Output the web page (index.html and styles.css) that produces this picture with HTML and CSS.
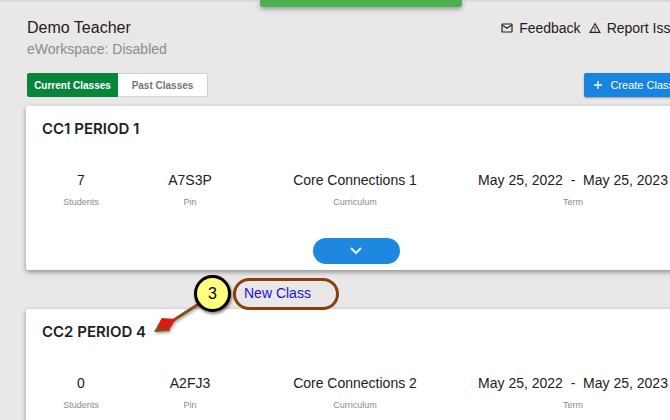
FILE: index.html
```
<!DOCTYPE html>
<html lang="en">
<head>
	<meta charset="UTF-8">
	<title>Demo Teacher - Classes</title>
	<meta name="viewport" content="width=device-width, initial-scale=1.0">
	<link rel="stylesheet" href="styles.css">
</head>
<body>
	<div class="toast" role="status"></div>
	<main class="workspace">
		<header class="header">
			<div>
				<h1 class="teacher">Demo Teacher</h1>
				<p class="status">eWorkspace: Disabled</p>
			</div>
			<nav class="links">
				<a href="#feedback">
					<svg width="12" height="12" viewBox="0 0 12 12" fill="none" stroke="currentColor" stroke-width="1.2">
						<rect x="1" y="2" width="10" height="8" rx="0.6"/>
						<path d="M1.5 3.2L6 6.2l4.500-3"/>
					</svg>
					Feedback
				</a>
				<a href="#report">
					<svg width="12" height="12" viewBox="0 0 12 12" fill="none" stroke="currentColor" stroke-width="1.1">
						<path d="M6 1.600L11 10.400H1z"/>
						<path d="M6 4.800v2.700M6 8.200v1.100"/>
					</svg>
					Report Issue
				</a>
			</nav>
		</header>

		<div class="toolbar">
			<div class="tabs">
				<button type="button" class="tab active">Current Classes</button>
				<button type="button" class="tab">Past Classes</button>
			</div>
			<button type="button" class="create">
				<svg width="10" height="10" viewBox="0 0 10 10" fill="none" stroke="currentColor" stroke-width="1.3">
					<path d="M5 1v8M1 5h8"/>
				</svg>
				Create Class
			</button>
		</div>

		<section class="card">
			<h2 class="card-title">CC1 PERIOD 1</h2>
			<dl class="details">
				<div><dt>Students</dt><dd>7</dd></div>
				<div><dt>Pin</dt><dd>A7S3P</dd></div>
				<div><dt>Curriculum</dt><dd>Core Connections 1</dd></div>
				<div><dt>Term</dt><dd>May 25, 2022 &nbsp;-&nbsp; May 25, 2023</dd></div>
			</dl>
			<button type="button" class="expand" aria-label="Show more">
				<svg width="14" height="10" viewBox="0 0 14 10" fill="none" stroke="currentColor" stroke-width="2">
					<path d="M2 2l5 5 5-5"/>
				</svg>
			</button>
		</section>

		<section class="card">
			<h2 class="card-title">CC2 PERIOD 4</h2>
			<dl class="details">
				<div><dt>Students</dt><dd>0</dd></div>
				<div><dt>Pin</dt><dd>A2FJ3</dd></div>
				<div><dt>Curriculum</dt><dd>Core Connections 2</dd></div>
				<div><dt>Term</dt><dd>May 25, 2022 &nbsp;-&nbsp; May 25, 2023</dd></div>
			</dl>
			<button type="button" class="expand" aria-label="Show more">
				<svg width="14" height="10" viewBox="0 0 14 10" fill="none" stroke="currentColor" stroke-width="2">
					<path d="M2 2l5 5 5-5"/>
				</svg>
			</button>

			<!-- step 3: points at the class title -->
			<div class="callout">
				<svg class="arrow" width="60" height="44" viewBox="0 0 60 44">
					<path d="M54 4L12 31" stroke="#86500f" stroke-width="3"/>
					<path d="M0 38L8 24L16 37z" fill="#86500f"/>
					<path d="M3 33L8 24L22 25L15 36z" fill="#d81c14"/>
				</svg>
				<span class="step">3</span>
				<span class="label">New Class</span>
			</div>
		</section>
	</main>
</body>
</html>
```

FILE: styles.css
```
* {
	box-sizing: border-box;
}
body {
	margin: 0;
	border-top: 2px solid #dbd9da;
	background: #e9e7e8;
	color: #212121;
	font-family: "Liberation Sans", Arial, sans-serif;
	font-size: 14px;
	line-height: 20px;
	overflow: hidden;
}
h1, h2, p, dl, dd {
	margin: 0;
}
button {
	border: 0;
	font-family: inherit;
	cursor: pointer;
}

.toast {
	position: absolute;
	top: 0;
	left: 260px;
	width: 202px;
	height: 7px;
	border-radius: 0 0 3px 3px;
	background: #4caf50;
	box-shadow: 0 2px 5px rgba(0, 0, 0, .35);
}

/* the sheet runs on past the right edge of the window */
.workspace {
	margin: 0 -16px 0 26px;
	padding-top: 16px;
}

.header {
	display: flex;
	justify-content: space-between;
	align-items: flex-start;
}
.teacher {
	padding-left: 1px;
	font-size: 16px;
	font-weight: normal;
	line-height: 20px;
}
.status {
	padding-left: 1px;
	color: #8c8b8c;
	line-height: 22px;
}
.links {
	display: flex;
	gap: 8px;
}
.links a {
	display: flex;
	align-items: center;
	gap: 6px;
	color: #212121;
	text-decoration: none;
}

.toolbar {
	display: flex;
	justify-content: space-between;
	margin-top: 13px;
	padding-left: 1px;
}
.tabs {
	display: flex;
	height: 24px;
	border: 1px solid #d2d0d1;
	border-radius: 2px;
	background: #fff;
}
.tab {
	width: 89px;
	padding: 0;
	background: none;
	color: #757575;
	font-size: 10px;
	font-weight: bold;
}
.tab.active {
	width: 91px;
	margin: -1px 0 -1px -1px;
	border-radius: 2px 0 0 2px;
	background: #07863b;
	color: #fff;
}
.create {
	display: flex;
	align-items: center;
	gap: 7px;
	height: 24px;
	padding: 0 12px 0 9px;
	border-radius: 2px;
	background: #1784e0;
	box-shadow: 0 1px 2px rgba(0, 0, 0, .35);
	color: #fff;
	font-size: 11px;
}

.card {
	position: relative;
	height: 164px;
	margin: 9px 0 39px;
	padding-top: 12px;
	border-radius: 2px;
	background: #fff;
	box-shadow: 0 2px 5px rgba(0, 0, 0, .4);
}
.card-title {
	padding-left: 16px;
	font-family: Inter, "Liberation Sans", sans-serif;
	font-size: 15px;
	font-weight: 600;
	line-height: 22px;
}
.details {
	display: grid;
	grid-template-columns: 110fr 108fr 222fr 214fr;
	margin-top: 30px;
	padding-right: 6px;
	text-align: center;
	white-space: nowrap;
}
.details div {
	display: flex;
	flex-direction: column-reverse;
}
.details dd {
	line-height: 20px;
}
.details dt {
	color: #8a8a8a;
	font-size: 9px;
	line-height: 24px;
}
.expand {
	display: flex;
	align-items: center;
	justify-content: center;
	width: 87px;
	height: 26px;
	margin: 24px auto 0;
	border-radius: 13px;
	background: #1e88e0;
	color: #d8fbff;
}

.callout {
	position: absolute;
	top: -34px;
	left: 168px;
	display: flex;
	align-items: center;
	gap: 2px;
}
.step {
	display: flex;
	align-items: center;
	justify-content: center;
	width: 37px;
	height: 37px;
	border: 3px solid #000;
	border-radius: 50%;
	background: #ffff80;
	box-shadow: 1px 2px 3px rgba(0, 0, 0, .5);
	color: #000;
	font-size: 16px;
	z-index: 1;
}
.label {
	width: 106px;
	height: 32px;
	padding-left: 8px;
	border: 3px solid #8a3e0c;
	border-radius: 16px;
	color: #1a12d8;
	line-height: 24px;
}
.arrow {
	position: absolute;
	top: 19px;
	left: -40px;
	filter: drop-shadow(1px 2px 1px rgba(0, 0, 0, .3));
}
```
